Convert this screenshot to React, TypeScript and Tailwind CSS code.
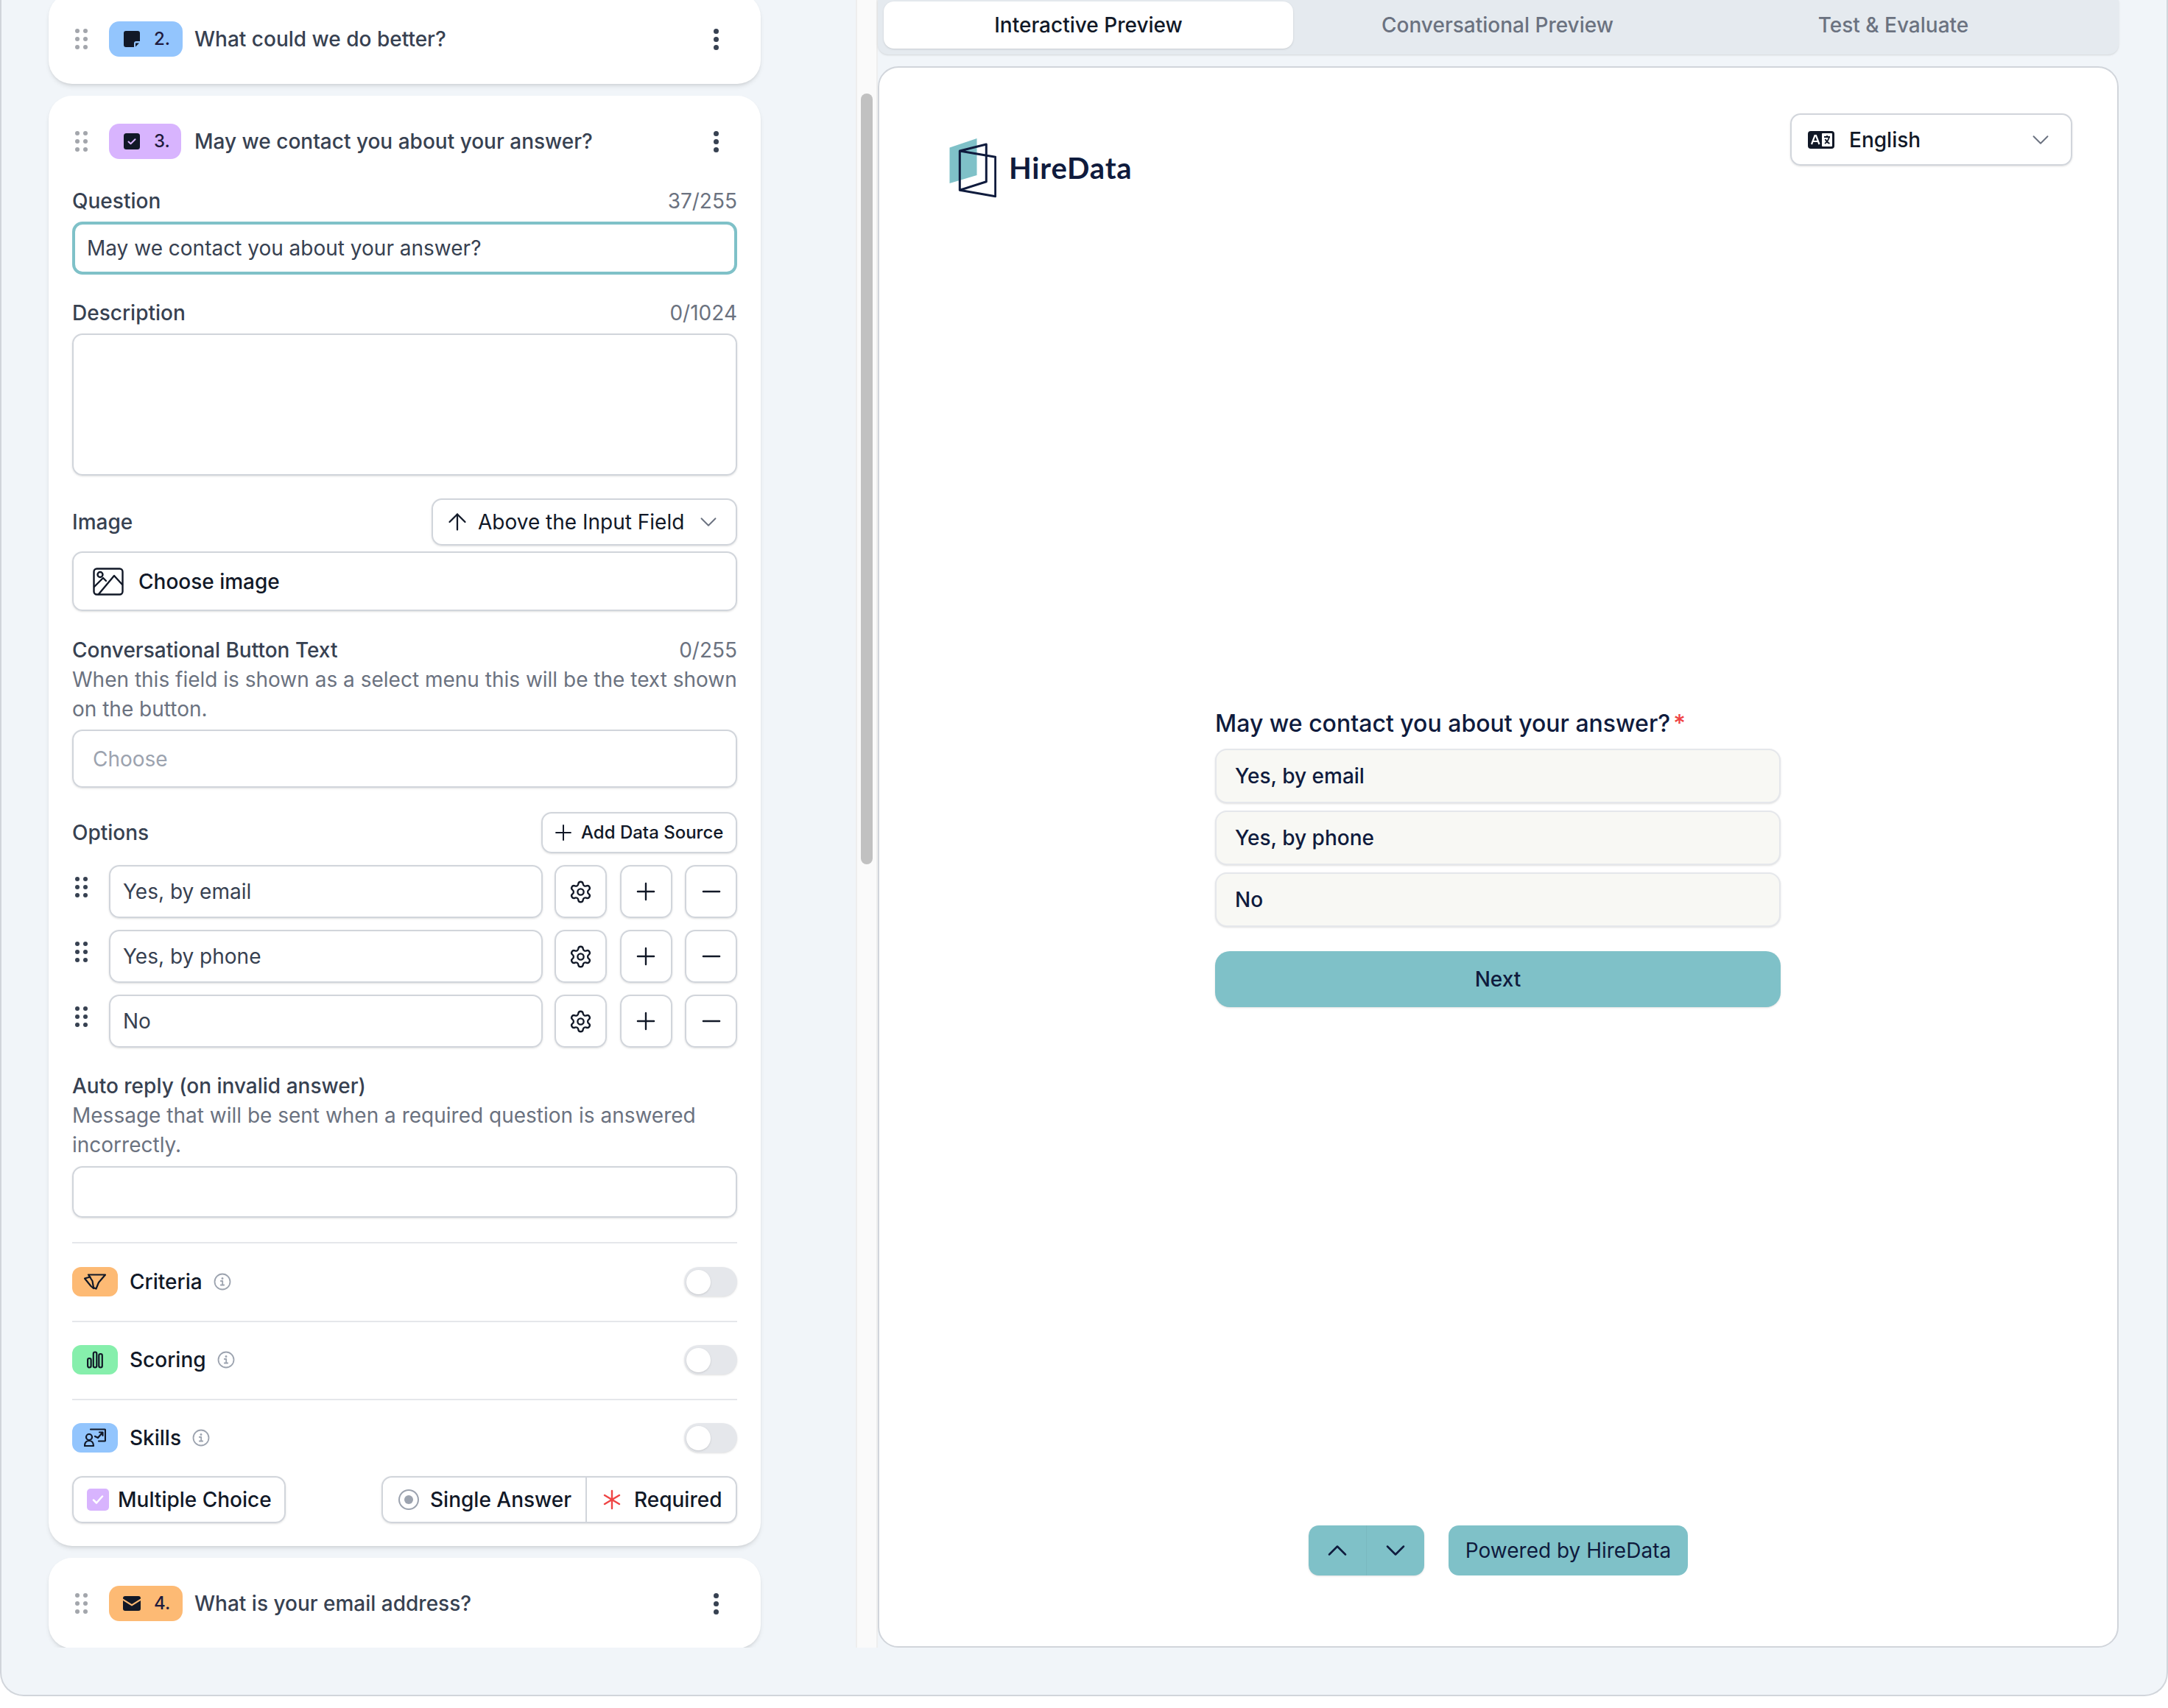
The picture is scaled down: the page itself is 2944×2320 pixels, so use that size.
import { ArrowUp, ChevronDown, ChevronUp, Minus, Plus, Settings } from 'lucide-react';

function DragDots({ dark }: { dark?: boolean }) {
  const cls = dark ? 'w-[6px] h-[6px] rounded-full bg-[#374151]' : 'w-[6px] h-[6px] rounded-full bg-[#a3a6ac]';
  return (
    <div className="grid grid-cols-2 gap-x-[5px] gap-y-[5px] w-[17px] shrink-0">
      {[0, 1, 2, 3, 4, 5].map((i) => (
        <span key={i} className={cls} />
      ))}
    </div>
  );
}

function Kebab() {
  return (
    <div className="flex flex-col gap-[4px] items-center w-[8px] shrink-0">
      <span className="w-[7px] h-[7px] rounded-full bg-[#374151]" />
      <span className="w-[7px] h-[7px] rounded-full bg-[#374151]" />
      <span className="w-[7px] h-[7px] rounded-full bg-[#374151]" />
    </div>
  );
}

function NoteIcon() {
  return (
    <svg width="22" height="22" viewBox="0 0 22 22">
      <path d="M3 0h16a3 3 0 0 1 3 3v11h-5a3 3 0 0 0-3 3v5H3a3 3 0 0 1-3-3V3a3 3 0 0 1 3-3z" fill="#111827" />
      <path d="M16 16.500h5l-5 5z" fill="#111827" />
    </svg>
  );
}

function CheckIcon() {
  return (
    <svg width="22" height="22" viewBox="0 0 22 22">
      <rect width="22" height="22" rx="3.500" fill="#111827" />
      <path d="M6.500 11.500l3 2.800 6-6" fill="none" stroke="#d8b4fe" strokeWidth="2" strokeLinecap="round" strokeLinejoin="round" />
    </svg>
  );
}

function MailIcon() {
  return (
    <svg width="24" height="20" viewBox="0 0 24 20">
      <path d="M3 0h18a3 3 0 0 1 3 3v.5L12 11 0 3.500V3a3 3 0 0 1 3-3z" fill="#111827" />
      <path d="M0 6l12 7.500L24 6v11a3 3 0 0 1-3 3H3a3 3 0 0 1-3-3z" fill="#111827" />
    </svg>
  );
}

function Info() {
  return (
    <svg width="24" height="24" viewBox="0 0 24 24" fill="none" stroke="#9ca3af" strokeWidth="1.800" strokeLinecap="round" strokeLinejoin="round">
      <circle cx="12" cy="12" r="10.500" />
      <circle cx="12" cy="7.500" r="0.600" fill="#9ca3af" />
      <path d="M9.800 11h2.400v5.500M9.800 16.500h4.400" />
    </svg>
  );
}

function CriteriaIcon() {
  return (
    <svg width="30" height="22" viewBox="0 0 30 22" fill="none" stroke="#111827" strokeWidth="2.200" strokeLinejoin="round" strokeLinecap="round">
      <path d="M6 1.500h23l-9 10.500-3.500 8.500L13 19l-1.500-9z" />
      <path d="M8.500 4.500L1 6.500l8.500 10.500 3.500 3" />
    </svg>
  );
}

function ScoringIcon() {
  return (
    <svg width="22" height="24" viewBox="0 0 22 24" fill="none" stroke="#111827" strokeWidth="2.200">
      <rect x="1.100" y="10" width="4.500" height="12.500" rx="2.200" />
      <rect x="8.800" y="1.500" width="4.500" height="21" rx="2.200" />
      <rect x="16.300" y="4" width="4.500" height="18.500" rx="2.200" />
    </svg>
  );
}

function SkillsIcon() {
  return (
    <svg width="30" height="26" viewBox="0 0 30 26" fill="none" stroke="#111827" strokeWidth="2.200" strokeLinecap="round" strokeLinejoin="round">
      <path d="M9 1.500h19a1 1 0 0 1 1 1v14a1 1 0 0 1-1 1h-8" />
      <circle cx="7" cy="12" r="4" />
      <path d="M1 24c0-5 3-7 6-7s6 2 6 7z" />
      <path d="M15 11l4 2 6-7M21 5.500h4.500V10" />
    </svg>
  );
}

function ImageIcon() {
  return (
    <svg width="42" height="38" viewBox="0 0 42 38" fill="none" stroke="#111827" strokeWidth="2.400" strokeLinecap="round" strokeLinejoin="round">
      <rect x="1.500" y="1.500" width="39" height="35" rx="4" />
      <circle cx="10" cy="9.500" r="3.500" />
      <path d="M2 26l12-12 4 4M8 36l21-25 11 12" />
    </svg>
  );
}

function LangIcon() {
  return (
    <svg width="36" height="24" viewBox="0 0 36 24">
      <rect width="36" height="24" rx="4" fill="#111827" />
      <rect x="19" y="3" width="14" height="18" rx="1" fill="#fff" />
      <path d="M5 18l4.500-12h1.500l4.500 12M7 14h6.500" fill="none" stroke="#fff" strokeWidth="2.200" />
      <path d="M22 8h8M26 6v2M29 8c-1 4-3 7-6 9M23.500 11c1.500 3 3.500 5 6 6" fill="none" stroke="#111827" strokeWidth="1.800" />
    </svg>
  );
}

function Logo() {
  return (
    <svg width="64" height="82" viewBox="0 0 64 82" className="shrink-0">
      <path d="M0.500 13.500L37.500 1v50L0.500 62z" fill="#7fc1c8" />
      <path d="M14.300 18L50.300 9v50.700L14.300 71.300zM14.300 18L62.700 26.300v53.400L14.300 71.300" fill="none" stroke="#0f1b3d" strokeWidth="3" strokeLinejoin="round" />
    </svg>
  );
}

function QuestionHead({ badge, icon, num, title }: { badge: string; icon: React.ReactNode; num: string; title: string }) {
  return (
    <div className="flex items-center h-[48px]">
      <div className="ml-[4px]"><DragDots /></div>
      <div className={badge}>
        <span className="w-[24px] flex justify-center">{icon}</span>
        <span className="text-[24px] font-medium text-[#1f1b3d] ml-[18px]">{num}</span>
      </div>
      <span className="ml-[16px] text-[28px] font-medium text-[#374151] flex-1">{title}</span>
      <div className="mr-[25px]"><Kebab /></div>
    </div>
  );
}

function OptionRow({ label }: { label: string }) {
  const btn = 'w-[71px] h-[72px] rounded-[14px] border-2 border-[#d1d5db] shadow-sm flex items-center justify-center text-[#111827]';
  return (
    <div className="flex items-start h-[72px]">
      <div className="ml-[4px] mt-[16px]"><DragDots dark /></div>
      <div className="ml-[29px] w-[589px] h-[72px] rounded-[14px] border-2 border-[#d1d5db] shadow-sm flex items-center pl-[17px] text-[28px] text-[#374151]">{label}</div>
      <div className="ml-[16px] flex gap-[17.500px]">
        <div className={btn}><Settings size={33} strokeWidth={1.700} /></div>
        <div className={btn}><Plus size={38} strokeWidth={1.500} /></div>
        <div className={btn}><Minus size={38} strokeWidth={1.500} /></div>
      </div>
    </div>
  );
}

function ToggleRow({ badge, icon, label }: { badge: string; icon: React.ReactNode; label: string }) {
  return (
    <div className="flex items-center h-[40px]">
      <div className={badge}>{icon}</div>
      <span className="ml-[16px] text-[28px] font-medium text-[#111827]">{label}</span>
      <span className="ml-[15px] flex"><Info /></span>
      <div className="ml-auto w-[72px] h-[40px] rounded-full bg-[#e5e7eb] shadow-sm flex items-center pl-[3px]">
        <span className="w-[33px] h-[33px] rounded-full bg-white shadow" />
      </div>
    </div>
  );
}

export default function App() {
  const label = 'text-[28px] leading-[40px] font-medium text-[#374151]';
  const hint = 'text-[28px] leading-[40px] text-[#6b7280]';
  const field = 'rounded-[14px] border-2 border-[#d1d5db] shadow-sm';
  return (
    <div className="h-[2320px] w-[2944px] bg-white font-[Inter,sans-serif] overflow-hidden">
      <div className="h-[2304px] flex rounded-b-[32px] border-x-2 border-b-2 border-[#d1d5db] bg-[#f1f5f9] overflow-hidden">
        {/* question list */}
        <div className="w-[1160px] h-[2238px] overflow-hidden pl-[64px] shrink-0">
          <div className="w-[967px] -mt-[9px] bg-white rounded-[32px] shadow-md pt-[38px] pb-[37px] px-[32px]">
            <QuestionHead
              badge="ml-[29px] w-[100px] h-[48px] rounded-[14px] bg-[#93c5fd] flex items-center pl-[19px]"
              icon={<NoteIcon />}
              num="2."
              title="What could we do better?"
            />
          </div>

          <div className="w-[967px] mt-[16px] bg-white rounded-[32px] shadow-md pt-[38px] pb-[31px] px-[32px]">
            <QuestionHead
              badge="ml-[29px] mr-[2px] w-[98px] h-[48px] rounded-[14px] bg-[#d8b4fe] flex items-center pl-[19px]"
              icon={<CheckIcon />}
              num="3."
              title="May we contact you about your answer?"
            />

            <div className="mt-[37px] flex justify-between">
              <span className={label}>Question</span>
              <span className={hint}>37/255</span>
            </div>
            <div className="mt-[8px] h-[72px] rounded-[14px] border-[4px] border-[#7fc1c8] flex items-center pl-[16px] text-[28px] text-[#374151]">
              May we contact you about your answer?
            </div>

            <div className="mt-[32px] flex justify-between">
              <span className={label}>Description</span>
              <span className={hint}>0/1024</span>
            </div>
            <div className={`mt-[8px] h-[193px] ${field}`} />

            <div className="mt-[31px] flex items-center justify-between h-[64px]">
              <span className={label}>Image</span>
              <div className={`w-[415px] h-[64px] flex items-center pl-[15px] text-[28px] text-[#111827] ${field}`}>
                <ArrowUp size={36} strokeWidth={1.500} className="shrink-0" />
                <span className="ml-[10px]">Above the Input Field</span>
                <ChevronDown size={38} strokeWidth={1.200} className="ml-auto mr-[18px] text-[#6b7280] shrink-0" />
              </div>
            </div>
            <div className={`mt-[8px] h-[81px] flex items-center pl-[26px] text-[28px] font-medium text-[#111827] ${field}`}>
              <ImageIcon />
              <span className="ml-[20px]">Choose image</span>
            </div>

            <div className="mt-[33px] flex justify-between">
              <span className={label}>Conversational Button Text</span>
              <span className={hint}>0/255</span>
            </div>
            <p className={`${hint} whitespace-nowrap`}>When this field is shown as a select menu this will be the text shown<br />on the button.</p>
            <div className={`mt-[8px] h-[79px] flex items-center pl-[26px] text-[28px] text-[#9ca3af] ${field}`}>Choose</div>

            <div className="mt-[33px] flex items-center justify-between h-[56px]">
              <span className={label}>Options</span>
              <div className={`w-[266px] h-[56px] flex items-center pl-[11px] text-[24px] font-medium text-[#111827] ${field}`}>
                <Plus size={34} strokeWidth={1.400} className="shrink-0" />
                <span className="ml-[7px]">Add Data Source</span>
              </div>
            </div>
            <div className="mt-[16px] flex flex-col gap-[16px]">
              <OptionRow label="Yes, by email" />
              <OptionRow label="Yes, by phone" />
              <OptionRow label="No" />
            </div>

            <div className="mt-[32px]">
              <span className={label}>Auto reply (on invalid answer)</span>
            </div>
            <p className={hint}>Message that will be sent when a required question is answered incorrectly.</p>
            <div className={`mt-[9px] h-[70px] ${field}`} />

            <div className="mt-[33px] border-t-2 border-[#e5e7eb] pt-[32px] pb-[33px]">
              <ToggleRow badge="w-[62px] h-[40px] rounded-[12px] bg-[#fdba74] flex items-center justify-center" icon={<CriteriaIcon />} label="Criteria" />
            </div>
            <div className="border-t-2 border-[#e5e7eb] pt-[31px] pb-[33px]">
              <ToggleRow badge="w-[62px] h-[40px] rounded-[12px] bg-[#86efac] flex items-center justify-center" icon={<ScoringIcon />} label="Scoring" />
            </div>
            <div className="border-t-2 border-[#e5e7eb] pt-[31px]">
              <ToggleRow badge="w-[62px] h-[40px] rounded-[12px] bg-[#93c5fd] flex items-center justify-center" icon={<SkillsIcon />} label="Skills" />
            </div>

            <div className="mt-[32px] flex justify-between h-[64px]">
              <div className={`w-[290px] flex items-center pl-[18px] text-[28px] font-medium text-[#111827] ${field}`}>
                <span className="w-[30px] h-[30px] rounded-[5px] bg-[#d8b4fe] flex items-center justify-center">
                  <svg width="18" height="18" viewBox="0 0 18 18" fill="none" stroke="#fff" strokeWidth="2.500" strokeLinecap="round" strokeLinejoin="round"><path d="M3 9.500l4 4 8-9" /></svg>
                </span>
                <span className="ml-[12px]">Multiple Choice</span>
              </div>
              <div className={`w-[483px] flex text-[28px] font-medium text-[#111827] ${field}`}>
                <div className="w-[277px] flex items-center pl-[21px] border-r-2 border-[#d1d5db]">
                  <span className="w-[28px] h-[28px] rounded-full border-2 border-[#9ca3af] flex items-center justify-center">
                    <span className="w-[12px] h-[12px] rounded-full bg-[#9ca3af]" />
                  </span>
                  <span className="ml-[15px]">Single Answer</span>
                </div>
                <div className="flex-1 flex items-center pl-[22px]">
                  <svg width="24" height="28" viewBox="0 0 24 28" fill="none" stroke="#ef4444" strokeWidth="2.400" strokeLinecap="round"><path d="M12 2v24M2 8l20 12M22 8L2 20" /></svg>
                  <span className="ml-[18px]">Required</span>
                </div>
              </div>
            </div>
          </div>

          <div className="w-[967px] mt-[16px] bg-white rounded-[32px] shadow-md pt-[38px] pb-[37px] px-[32px]">
            <QuestionHead
              badge="ml-[29px] w-[100px] h-[48px] rounded-[14px] bg-[#fdba74] flex items-center pl-[19px]"
              icon={<MailIcon />}
              num="4."
              title="What is your email address?"
            />
          </div>
        </div>

        {/* scrollbar */}
        <div className="w-[30px] h-[2238px] shrink-0 bg-[#fafafa] border-x-2 border-[#eeeeee] pt-[127px] px-[5px]">
          <div className="h-[1047px] rounded-full bg-[#c1c1c1]" />
        </div>

        {/* preview */}
        <div className="w-[1685px] h-[2238px] shrink-0 flex flex-col">
          <div className="h-[74px] shrink-0 rounded-b-[14px] bg-[#e5eaef] shadow-sm flex pt-[2px] pl-[8px] text-[28px] font-medium text-[#6b7280]">
            <div className="w-[556px] h-[64px] rounded-[14px] bg-white text-[#111827] shadow-sm flex items-center justify-center">Interactive Preview</div>
            <div className="w-[555px] h-[64px] flex items-center justify-center">Conversational Preview</div>
            <div className="w-[520px] h-[64px] flex items-center justify-center">Test &amp; Evaluate</div>
          </div>

          <div className="mt-[16px] flex-1 bg-white rounded-[28px] border-2 border-[#d1d5db] flex flex-col">
            <div className="flex justify-between items-start pt-[62px] pl-[95px] pr-[61px]">
              <div className="mt-[33px] flex items-start">
                <Logo />
                <span className="ml-[17px] mt-[17px] text-[40px] leading-[48px] font-bold text-[#0f1b3d] tracking-[0.02em] font-[Lato,sans-serif]">HireData</span>
              </div>
              <div className={`w-[383px] h-[71px] flex items-center pl-[22px] text-[28px] font-medium text-[#111827] ${field}`}>
                <LangIcon />
                <span className="ml-[20px]">English</span>
                <ChevronDown size={38} strokeWidth={1.200} className="ml-auto mr-[22px] text-[#6b7280] shrink-0" />
              </div>
            </div>

            <div className="mt-[694px] ml-[456px] w-[768px]">
              <div className="h-[40px] leading-[40px] text-[32px] font-medium text-[#0f1b3d]">
                May we contact you about your answer?<span className="ml-[4px] text-[#ef4444]">*</span>
              </div>
              <div className="mt-[14px] flex flex-col gap-[10px]">
                {['Yes, by email', 'Yes, by phone', 'No'].map((o) => (
                  <div key={o} className="h-[74px] rounded-[16px] border-2 border-[#e5e7eb] bg-[#f8f8f4] shadow-sm flex items-center pl-[25px] text-[28px] font-medium text-[#0f1b3d]">{o}</div>
                ))}
              </div>
              <div className="mt-[33px] h-[76px] rounded-[20px] bg-[#7fc1c8] shadow-sm flex items-center justify-center text-[28px] font-medium text-[#0f1b3d]">Next</div>
            </div>

            <div className="mt-auto mb-[96px] flex justify-center gap-[33px]">
              <div className="w-[157px] h-[68px] rounded-[14px] bg-[#7fc1c8] shadow-sm flex text-[#0f1b3d]">
                <div className="flex-1 flex items-center justify-center border-r border-[#7ab9c0]"><ChevronUp size={44} strokeWidth={1.400} /></div>
                <div className="flex-1 flex items-center justify-center"><ChevronDown size={44} strokeWidth={1.400} /></div>
              </div>
              <div className="w-[325px] h-[68px] rounded-[14px] bg-[#7fc1c8] flex items-center justify-center text-[28px] text-[#0f1b3d]">Powered by HireData</div>
            </div>
          </div>
        </div>
      </div>
    </div>
  );
}
